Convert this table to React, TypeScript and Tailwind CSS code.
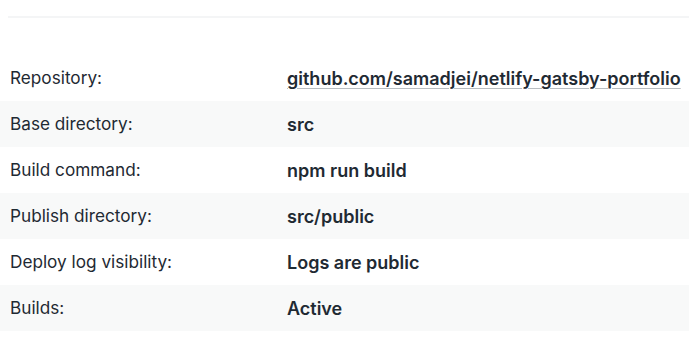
import React from 'react';

const rows: { label: string; value: string; link?: boolean }[] = [
  { label: 'Repository:', value: 'github.com/samadjei/netlify-gatsby-portfolio', link: true },
  { label: 'Base directory:', value: 'src' },
  { label: 'Build command:', value: 'npm run build' },
  { label: 'Publish directory:', value: 'src/public' },
  { label: 'Deploy log visibility:', value: 'Logs are public' },
  { label: 'Builds:', value: 'Active' },
];

const App: React.FC = () => {
  return (
    <div
      className="w-[689px] h-[363px] bg-white text-[#1f2a33] overflow-hidden"
      style={{ fontFamily: 'Inter, "Noto Sans", sans-serif' }}
    >
      <div className="pt-4 pl-2">
        <div className="h-[2px] bg-[#f4f5f6]" />
      </div>
      <dl className="mt-[37px]">
        {rows.map((row, i) => (
          <div
            key={row.label}
            className={`flex items-center h-[46px] ${i % 2 === 1 ? 'bg-[#f8f9f9]' : ''}`}
          >
            <dt className="w-[287px] pl-[10px] font-normal text-[17.2px]">{row.label}</dt>
            <dd className="font-semibold text-[18px]">
              {row.link ? (
                <a
                  href="#"
                  className="underline decoration-[#b8bdc1] decoration-1 underline-offset-[3px]"
                >
                  {row.value}
                </a>
              ) : (
                row.value
              )}
            </dd>
          </div>
        ))}
      </dl>
    </div>
  );
};

export default App;
